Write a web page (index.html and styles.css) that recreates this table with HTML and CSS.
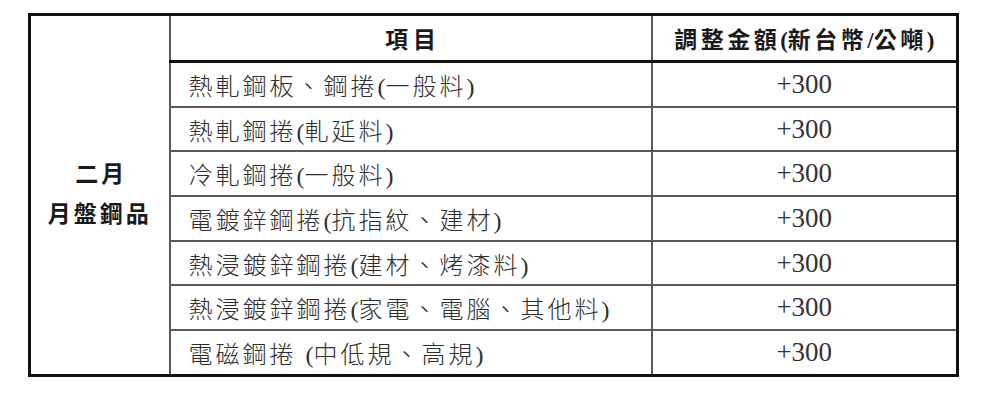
FILE: index.html
```html
<!DOCTYPE html>
<html>
<head>
<meta charset="utf-8">
<link rel="stylesheet" href="styles.css">
</head>
<body>
<table class="price">
  <colgroup>
    <col class="c1"><col class="c2"><col class="c3">
  </colgroup>
  <tr class="head">
    <td class="group" rowspan="8">二月<br>月盤鋼品</td>
    <th class="item-h">項目</th>
    <th class="amt-h">調整金額<span class="p">(</span>新台幣<span class="p">/</span>公噸<span class="p">)</span></th>
  </tr>
  <tr><td class="item">熱軋鋼板、鋼捲<span class="p">(</span>一般料<span class="p">)</span></td><td class="amt">+300</td></tr>
  <tr><td class="item">熱軋鋼捲<span class="p">(</span>軋延料<span class="p">)</span></td><td class="amt">+300</td></tr>
  <tr><td class="item">冷軋鋼捲<span class="p">(</span>一般料<span class="p">)</span></td><td class="amt">+300</td></tr>
  <tr><td class="item">電鍍鋅鋼捲<span class="p">(</span>抗指紋、建材<span class="p">)</span></td><td class="amt">+300</td></tr>
  <tr><td class="item">熱浸鍍鋅鋼捲<span class="p">(</span>建材、烤漆料<span class="p">)</span></td><td class="amt">+300</td></tr>
  <tr><td class="item">熱浸鍍鋅鋼捲<span class="p">(</span>家電、電腦、其他料<span class="p">)</span></td><td class="amt">+300</td></tr>
  <tr><td class="item">電磁鋼捲 <span class="p">(</span>中低規、高規<span class="p">)</span></td><td class="amt">+300</td></tr>
</table>
</body>
</html>
```
FILE: styles.css
```css
html, body {
  margin: 0;
  background: #ffffff;
}
body {
  padding: 13px 0 0 28px;
  font-family: "Liberation Serif", "Noto Sans CJK TC", serif;
  color: #2e2e2e;
}
.price {
  border-collapse: collapse;
  width: 928px;
  table-layout: fixed;
  border: 3px solid #111;
}
.c1 { width: 140px; }
.c2 { width: 482px; }
.c3 { width: 306px; }
.price td, .price th {
  padding: 0;
  height: 42.7px;
  border: 2px solid #5a5a5a;
}
.head th {
  height: 44px;
  border-top: 3px solid #111;
  border-bottom: 3px solid #111;
  font-weight: 700;
  font-size: 23px;
  color: #1a1a1a;
  text-align: center;
}
.item-h {
  letter-spacing: 5px;
  text-indent: 5px;
}
.amt-h {
  letter-spacing: 3.5px;
  font-size: 25px;
}
.p {
  letter-spacing: 0;
  font-family: "Liberation Serif", serif;
}
.group {
  border: 3px solid #111;
  border-right: 2px solid #444;
  text-align: center;
  font-weight: 700;
  font-size: 23px;
  line-height: 40px;
  letter-spacing: 3px;
  text-indent: 3px;
  color: #1a1a1a;
}
.item {
  font-size: 24px;
  font-weight: 300;
  letter-spacing: 3px;
  padding-left: 18px !important;
  white-space: nowrap;
}
.amt {
  text-align: center;
  font-family: "Liberation Serif", "Times New Roman", serif;
  font-size: 27px;
  color: #333;
}
```
